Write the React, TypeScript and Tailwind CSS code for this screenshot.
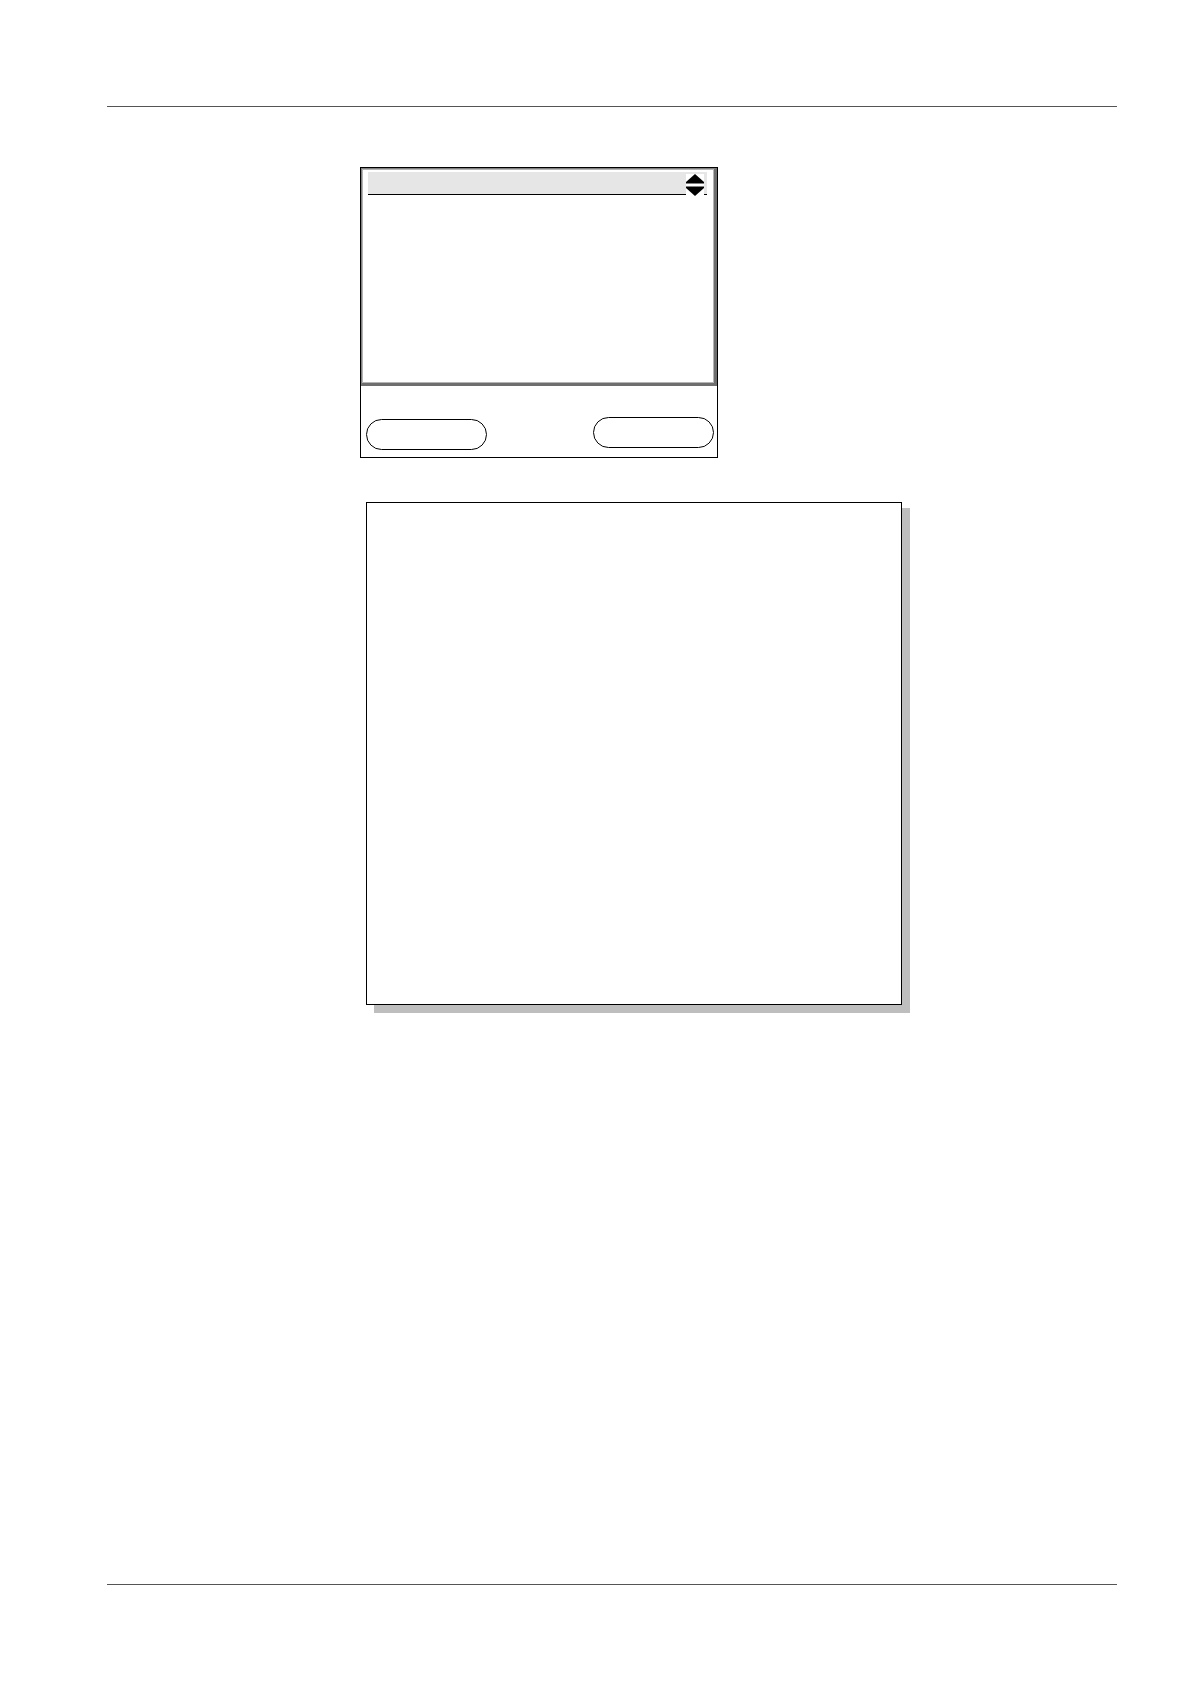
function ScrollArrows() {
  return (
    <button type="button" aria-label="Scroll" className="-mb-0.5 mr-[3px] h-[22px] w-[18px] bg-white">
      <svg viewBox="0 0 18 22" className="block h-[22px] w-[18px]" aria-hidden="true">
        <path d="M9 0 L18 8 V9.5 H0 V8 Z M0 12.5 H18 V14 L9 22 L0 14 Z" fill="#000" />
      </svg>
    </button>
  );
}

function DevicePanel() {
  return (
    <section className="flex w-[358px] flex-col border border-black">
      <div className="border-t border-r-3 border-b-3 border-l border-t-[#808080] border-r-[#6e6e6e] border-b-[#6e6e6e] border-l-[#808080]">
        <div className="h-[214px] border border-[#b4b4b4] pt-[2px] pr-[6px] pl-[5px]">
          <div className="flex h-[23px] items-end justify-end border-b border-black bg-[#e6e6e6]">
            <ScrollArrows />
          </div>
        </div>
      </div>
      <div className="flex items-start justify-between pt-[31px] pr-[3px] pb-[7px] pl-[5px]">
        <button type="button" aria-label="Left softkey" className="mt-[2px] h-[31px] w-[121px] rounded-full border border-black" />
        <button type="button" aria-label="Right softkey" className="h-[31px] w-[121px] rounded-full border border-black" />
      </div>
    </section>
  );
}

export default function App() {
  return (
    <div className="flex min-h-screen flex-col bg-white pt-[106px] pr-[73px] pb-[99px] pl-[107px]">
      <header className="border-t border-[#555]" />
      <main className="flex grow flex-col items-start pt-[60px] pl-[253px]">
        <DevicePanel />
        <article className="mt-11 ml-[6px] h-[503px] w-full max-w-[536px] border border-black bg-white shadow-[8px_6px_0_#bebebe,8px_8px_0_#bebebe]" />
      </main>
      <footer className="border-t border-[#555]" />
    </div>
  );
}
